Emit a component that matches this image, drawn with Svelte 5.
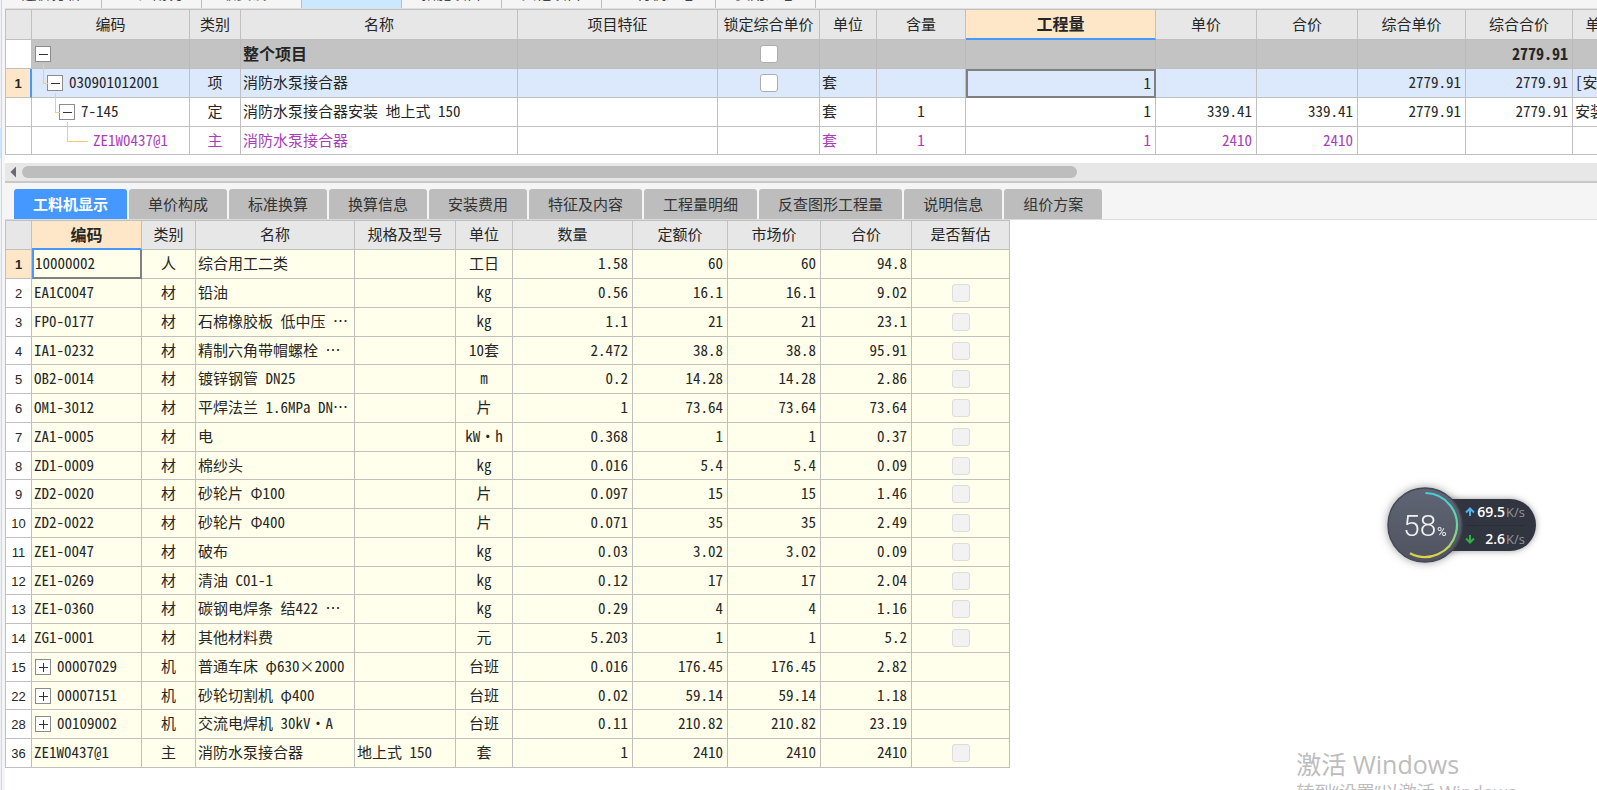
<script>
  const navTabs = ['造价分析', '工程概况', '取费设置', '分部分项', '措施项目', '其他项目', '人材机汇总', '费用汇总'];

  const itemWidths = [26, 158, 51, 277, 200, 102, 57, 89, 190, 101, 101, 108, 107, 116];
  const itemHeads = ['', '编码', '类别', '名称', '项目特征', '锁定综合单价', '单位', '含量', '工程量', '单价', '合价', '综合单价', '综合合价', '单价构成文件'];
  const items = [
    { kind: 'group', no: '', depth: 0, open: true, code: '', type: '', name: '整个项目', lock: true, unit: '', content: '', qty: '', price: '', total: '', fullPrice: '', fullTotal: '2779.91', file: '' },
    { kind: 'current', no: '1', depth: 1, open: true, code: '030901012001', type: '项', name: '消防水泵接合器', lock: true, unit: '套', content: '', qty: '1', price: '', total: '', fullPrice: '2779.91', fullTotal: '2779.91', file: '[安装工程]' },
    { kind: '', no: '', depth: 2, open: true, code: '7-145', type: '定', name: '消防水泵接合器安装 地上式 150', lock: false, unit: '套', content: '1', qty: '1', price: '339.41', total: '339.41', fullPrice: '2779.91', fullTotal: '2779.91', file: '安装工程' },
    { kind: 'main', no: '', depth: 3, open: false, code: 'ZE1W0437@1', type: '主', name: '消防水泵接合器', lock: false, unit: '套', content: '1', qty: '1', price: '2410', total: '2410', fullPrice: '', fullTotal: '', file: '' }
  ];

  const detailTabs = ['工料机显示', '单价构成', '标准换算', '换算信息', '安装费用', '特征及内容', '工程量明细', '反查图形工程量', '说明信息', '组价方案'];
  let activeTab = $state(0);

  const resWidths = [26, 110, 54, 159, 101, 57, 120, 95, 93, 91, 98];
  const resHeads = ['', '编码', '类别', '名称', '规格及型号', '单位', '数量', '定额价', '市场价', '合价', '是否暂估'];
  // no, code, type, name, spec, unit, quantity, quota price, market price, total, has estimate box, expandable
  const resources = [
    ['1', '10000002', '人', '综合用工二类', '', '工日', '1.58', '60', '60', '94.8', false, false],
    ['2', 'EA1C0047', '材', '铅油', '', 'kg', '0.56', '16.1', '16.1', '9.02', true, false],
    ['3', 'FP0-0177', '材', '石棉橡胶板 低中压 …', '', 'kg', '1.1', '21', '21', '23.1', true, false],
    ['4', 'IA1-0232', '材', '精制六角带帽螺栓 …', '', '10套', '2.472', '38.8', '38.8', '95.91', true, false],
    ['5', 'OB2-0014', '材', '镀锌钢管 DN25', '', 'm', '0.2', '14.28', '14.28', '2.86', true, false],
    ['6', 'OM1-3012', '材', '平焊法兰 1.6MPa DN…', '', '片', '1', '73.64', '73.64', '73.64', true, false],
    ['7', 'ZA1-0005', '材', '电', '', 'kW・h', '0.368', '1', '1', '0.37', true, false],
    ['8', 'ZD1-0009', '材', '棉纱头', '', 'kg', '0.016', '5.4', '5.4', '0.09', true, false],
    ['9', 'ZD2-0020', '材', '砂轮片 Φ100', '', '片', '0.097', '15', '15', '1.46', true, false],
    ['10', 'ZD2-0022', '材', '砂轮片 Φ400', '', '片', '0.071', '35', '35', '2.49', true, false],
    ['11', 'ZE1-0047', '材', '破布', '', 'kg', '0.03', '3.02', '3.02', '0.09', true, false],
    ['12', 'ZE1-0269', '材', '清油 C01-1', '', 'kg', '0.12', '17', '17', '2.04', true, false],
    ['13', 'ZE1-0360', '材', '碳钢电焊条 结422 …', '', 'kg', '0.29', '4', '4', '1.16', true, false],
    ['14', 'ZG1-0001', '材', '其他材料费', '', '元', '5.203', '1', '1', '5.2', true, false],
    ['15', '00007029', '机', '普通车床 φ630×2000', '', '台班', '0.016', '176.45', '176.45', '2.82', false, true],
    ['22', '00007151', '机', '砂轮切割机 φ400', '', '台班', '0.02', '59.14', '59.14', '1.18', false, true],
    ['28', '00109002', '机', '交流电焊机 30kV・A', '', '台班', '0.11', '210.82', '210.82', '23.19', false, true],
    ['36', 'ZE1W0437@1', '主', '消防水泵接合器', '地上式 150', '套', '1', '2410', '2410', '2410', true, false]
  ];
</script>

{#snippet toggle(open)}
  <button class="toggle" type="button" aria-label={open ? '收起' : '展开'}>
    <svg width="14" height="14" viewBox="0 0 14 14" aria-hidden="true">
      <path d={open ? 'M3 7.5H12' : 'M3 7.5H12M7.5 3V12'} stroke="#333" stroke-width="1" fill="none" />
    </svg>
  </button>
{/snippet}

<div class="app" lang="zh-CN">
  <aside class="edge"><span></span></aside>

  <main>
    <nav class="nav">
      {#each navTabs as tab, i}
        <button type="button" class:active={i === 3} aria-label={tab}>{i === 3 ? '' : tab}</button>
      {/each}
    </nav>

    <section class="items">
      <table>
        <colgroup>
          {#each itemWidths as w}<col style="width: {w}px" />{/each}
        </colgroup>
        <thead>
          <tr>
            {#each itemHeads as head, i}
              <th class:picked={i === 8}>{head}</th>
            {/each}
          </tr>
        </thead>
        <tbody>
          {#each items as row}
            <tr class={row.kind}>
              <td class="no">{row.no}</td>
              <td class="code">
                <div class="tree" style="--depth: {row.depth}" class:leaf={row.depth === 3} class:child={row.depth > 0}>
                  {#if row.open}{@render toggle(true)}{:else}<span class="blank"></span>{/if}
                  <span>{row.code}</span>
                </div>
              </td>
              <td class="mid">{row.type}</td>
              <td>{row.name}</td>
              <td></td>
              <td class="box">{#if row.lock}<input type="checkbox" aria-label="锁定综合单价" />{/if}</td>
              <td>{row.unit}</td>
              <td class="mid">{row.content}</td>
              <td class="num" class:cursor={row.kind === 'current'}>{row.qty}</td>
              <td class="num">{row.price}</td>
              <td class="num">{row.total}</td>
              <td class="num">{row.fullPrice}</td>
              <td class="num">{row.fullTotal}</td>
              <td>{row.file}</td>
            </tr>
          {/each}
        </tbody>
      </table>
    </section>

    <div class="scroll">
      <svg width="6" height="12" viewBox="0 0 6 12" aria-hidden="true"><path d="M6 0.5V11.5L0.5 6Z" fill="#6a6a72" /></svg>
      <div class="track"><div class="thumb" style="width: 67%"></div></div>
    </div>

    <div class="tabs" role="tablist">
      {#each detailTabs as tab, i}
        <button type="button" role="tab" aria-selected={activeTab === i} class:active={activeTab === i} onclick={() => (activeTab = i)}>{tab}</button>
      {/each}
    </div>

    <section class="resources">
      <table>
        <colgroup>
          {#each resWidths as w}<col style="width: {w}px" />{/each}
        </colgroup>
        <thead>
          <tr>
            {#each resHeads as head, i}
              <th class:picked={i === 1}>{head}</th>
            {/each}
          </tr>
        </thead>
        <tbody>
          {#each resources as r, i}
            <tr class:current={i === 0}>
              <td class="no">{r[0]}</td>
              <td class:code={r[11]} class:cursor={i === 0}>
                {#if r[11]}
                  <div class="tree" style="--depth: 0">{@render toggle(false)}<span>{r[1]}</span></div>
                {:else}{r[1]}{/if}
              </td>
              <td class="mid">{r[2]}</td>
              <td>{r[3]}</td>
              <td>{r[4]}</td>
              <td class="mid">{r[5]}</td>
              <td class="num">{r[6]}</td>
              <td class="num">{r[7]}</td>
              <td class="num">{r[8]}</td>
              <td class="num">{r[9]}</td>
              <td class="box">{#if r[10]}<input type="checkbox" disabled aria-label="是否暂估" />{/if}</td>
            </tr>
          {/each}
        </tbody>
      </table>
    </section>
  </main>

  <div class="monitor">
    <div class="speeds">
      <div class="speed">
        <svg width="10" height="10" viewBox="0 0 10 10" fill="none" stroke="#4fb4f5" stroke-width="2" aria-hidden="true"><path d="M5 9V2M1 5.5L5 1.5L9 5.5" /></svg>
        <b>69.5</b><small>K/s</small>
      </div>
      <div class="speed">
        <svg width="10" height="10" viewBox="0 0 10 10" fill="none" stroke="#2fb344" stroke-width="2" aria-hidden="true"><path d="M5 1V8M1 4.5L5 8.5L9 4.5" /></svg>
        <b>2.6</b><small>K/s</small>
      </div>
    </div>
    <svg class="gauge" width="76" height="76" viewBox="0 0 76 76" aria-hidden="true">
      <defs>
        <linearGradient id="face" x1="0" y1="0" x2="0" y2="1">
          <stop offset="0" stop-color="#5f6575" />
          <stop offset="1" stop-color="#50535f" />
        </linearGradient>
        <linearGradient id="arc" x1="0" y1="0" x2="0" y2="1">
          <stop offset="0" stop-color="#45d3dc" />
          <stop offset="0.5" stop-color="#5fd9a0" />
          <stop offset="1" stop-color="#e0d34a" />
        </linearGradient>
      </defs>
      <circle cx="38" cy="38" r="37" fill="url(#face)" stroke="#454955" stroke-width="1.5" />
      <path d="M38.5 6A32 32 0 1 1 23 66.3" fill="none" stroke="url(#arc)" stroke-width="2.2" />
      <text x="16" y="49" class="value">58</text>
      <text x="50" y="49" class="percent">%</text>
    </svg>
  </div>

  <div class="activate">
    <p class="title">激活 Windows</p>
    <p>转到“设置”以激活 Windows。</p>
  </div>
</div>

<style>
  :global(body) {
    background: #fff;
    overflow: hidden;
  }

  .app {
    position: relative;
    display: flex;
    height: 100vh;
    overflow: hidden;
    color: #262626;
    font: 15px/20px 'Noto Sans CJK SC', sans-serif;
  }

  button {
    font: inherit;
    border: 0;
    padding: 0;
    color: inherit;
  }

  .edge {
    flex: none;
    width: 5px;
    box-sizing: border-box;
    background: linear-gradient(90deg, #eef2f7 0 1px, #d6d6d6 1px 2px, #f5f5f5 2px);
  }
  .edge span {
    display: block;
    width: 1px;
    height: 30px;
    margin-top: 128px;
    background: #cbe6ff;
  }

  main {
    flex: 1;
    min-width: 0;
  }

  .nav {
    display: flex;
    align-items: flex-end;
    box-sizing: border-box;
    height: 9px;
    padding-right: 3px;
    overflow: hidden;
    background: #f5f5f5;
    border-bottom: 1px solid #e0e0e0;
  }
  .nav button {
    flex: none;
    height: 28px;
    min-width: 100px;
    padding: 0 19px 2px;
    background: #f5f5f5;
    border-right: 1px solid #bdbdbd;
    color: #444;
  }
  .nav button:first-child {
    min-width: 97px;
    padding-left: 16px;
  }
  .nav button.active {
    background: #cbe8ff;
  }

  table {
    table-layout: fixed;
    border-collapse: separate;
    border-spacing: 0;
    border-left: 1px solid #c0c0c0;
    border-top: 1px solid #c0c0c0;
    font-feature-settings: 'hwid';
  }
  th,
  td {
    box-sizing: border-box;
    padding: 0 4px 2px 2px;
    border-right: 1px solid #c0c0c0;
    border-bottom: 1px solid #c0c0c0;
    overflow: hidden;
    white-space: nowrap;
    text-align: left;
  }
  th {
    padding: 0 0 2px;
    background: #e7e7e7;
    font-weight: 400;
    text-align: center;
  }
  th.picked {
    background: #fee6c8;
    border-bottom: 2px solid #4498ff;
    font-size: 16px;
    font-weight: 700;
  }
  tr {
    height: 29px;
  }
  tbody tr:nth-child(4n) {
    height: 28px;
  }
  .mid {
    text-align: center;
    padding: 0 0 2px;
  }
  .box {
    padding: 0;
  }
  .num {
    text-align: right;
  }
  .no {
    padding: 2px 0 0;
    background: #fff;
    text-align: center;
    font-family: 'Liberation Sans', sans-serif;
    font-size: 13px;
    font-feature-settings: normal;
  }

  .items {
    overflow: hidden;
    padding-bottom: 8px;
  }
  .items table {
    width: 1684px;
  }
  .items thead tr {
    height: 30px;
  }
  .group td:not(.no) {
    background: #c3c3c3;
    border-right-color: #bababa;
    font-size: 16px;
    font-weight: 700;
  }
  .items .current td {
    background: #dce9fd;
  }
  .main td {
    color: #ab3dbb;
  }

  .items tr.current td.no,
  .resources tr.current td.no {
    background: #fee6c8;
    font-weight: 700;
  }
  .items tr.current td.no {
    border-right: 2px solid #4498ff;
  }
  .items td.cursor {
    border: 2px solid #808080;
    padding-right: 3px;
  }

  td.code {
    padding: 0 0 0 2px;
    overflow: visible;
  }
  .tree {
    position: relative;
    display: flex;
    align-items: center;
    gap: 6px;
    padding-left: calc(1px + var(--depth) * 12px);
  }
  .tree > span {
    padding-bottom: 2px;
  }
  .tree.child::before {
    content: '';
    position: absolute;
    left: calc(var(--depth) * 12px - 3px);
    bottom: 10px;
    width: 4px;
    height: 19px;
    border-left: 1px solid #ffc878;
    border-bottom: 1px solid #ffc878;
  }
  .tree.leaf::before {
    width: 20px;
  }
  .tree .toggle,
  .tree .blank {
    flex: none;
    display: block;
    box-sizing: border-box;
    width: 16px;
    height: 16px;
  }
  .toggle {
    background: #fff;
    border: 1px solid #8c8c8c;
  }
  .toggle svg {
    display: block;
  }

  input {
    appearance: none;
    display: block;
    box-sizing: border-box;
    width: 18px;
    height: 18px;
    margin: 0 auto;
    border: 1px solid #adadad;
    border-radius: 3px;
    background: #fff;
  }
  input:disabled {
    border-color: #dcdcdc;
    background: #f2f2f2;
  }

  .scroll {
    display: flex;
    align-items: center;
    gap: 6px;
    height: 18px;
    padding-left: 5px;
    background: #e7e7e7;
    border-bottom: 2px solid #c8c8c8;
  }
  .track {
    flex: 1;
  }
  .thumb {
    height: 12px;
    border-radius: 6px;
    background: #bdbdbd;
  }

  .tabs {
    display: flex;
    gap: 2px;
    padding: 6px 0 0 9px;
    background: #f5f5f5;
    border-bottom: 1px solid #dcdcdc;
  }
  .tabs button {
    height: 30px;
    padding: 0 19px;
    border-radius: 3px 3px 0 0;
    background: #bdbdbd;
    color: #333;
  }
  .tabs button.active {
    background: #4498ff;
    color: #fff;
    font-weight: 700;
  }

  .resources table {
    width: 1005px;
  }
  .resources tbody td:not(.no) {
    background: #ffffec;
  }
  .resources td.cursor {
    border: 2px solid #808080;
    border-left-color: #4498ff;
    border-top: 0;
    padding-left: 1px;
  }

  .monitor {
    position: absolute;
    top: 487px;
    right: 61px;
    display: flex;
    align-items: center;
    font-family: 'Open Sans', sans-serif;
  }
  .gauge {
    position: absolute;
    left: -37px;
    filter: drop-shadow(0 0 4px rgba(60, 60, 70, 0.5));
  }
  .value {
    font: 300 30px 'Roboto', sans-serif;
    fill: #f2f2f2;
  }
  .percent {
    font: 13px 'Roboto', sans-serif;
    fill: #f2f2f2;
  }
  .speeds {
    box-sizing: border-box;
    width: 112px;
    height: 52px;
    margin: 12px 0;
    padding: 0 11px 0 41px;
    border-radius: 0 26px 26px 0;
    background: #31353f;
    box-shadow: 0 0 6px rgba(60, 60, 70, 0.5);
  }
  .speed {
    display: flex;
    align-items: center;
    height: 26px;
    color: #fff;
  }
  .speed + .speed {
    border-top: 1px solid #2a2d35;
  }
  .speed b {
    flex: 1;
    text-align: right;
    font-size: 14px;
    font-weight: 600;
  }
  .speed small {
    margin-left: 1px;
    color: #9295a0;
    font-size: 13px;
  }

  .activate {
    position: absolute;
    top: 748px;
    right: 63px;
    color: #bdbdbd;
    font: 18px/24px 'Open Sans', 'Noto Sans CJK SC', sans-serif;
  }
  .activate p {
    margin: 0;
    white-space: nowrap;
  }
  .activate .title {
    font-size: 25px;
    line-height: 32px;
  }
</style>
